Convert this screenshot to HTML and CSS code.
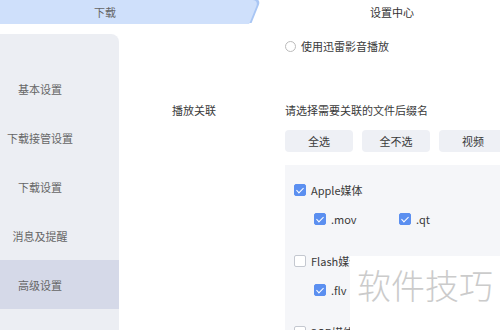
FILE: index.html
```html
<!DOCTYPE html>
<html lang="zh-CN">
<head>
    <meta charset="UTF-8">
    <title>设置中心</title>
    <link rel="stylesheet" href="styles.css">
</head>
<body>
    <div class="tabs">
        <div class="tab tab-off">下载</div>
        <div class="tab tab-on">设置中心</div>
    </div>

    <div class="page">
        <div class="sidebar">
            <div class="nav-item">基本设置</div>
            <div class="nav-item">下载接管设置</div>
            <div class="nav-item">下载设置</div>
            <div class="nav-item">消息及提醒</div>
            <div class="nav-item active">高级设置</div>
        </div>

        <div class="main">
            <div class="row first-row">
                <div class="label"></div>
                <div class="field">
                    <label class="radio"><span class="radio-dot"></span>使用迅雷影音播放</label>
                </div>
            </div>

            <div class="row">
                <div class="label">播放关联</div>
                <div class="field">
                    <div class="hint">请选择需要关联的文件后缀名</div>
                    <div class="btns">
                        <button class="btn">全选</button>
                        <button class="btn">全不选</button>
                        <button class="btn">视频</button>
                    </div>
                    <div class="panel">
                        <div class="group">
                            <label class="check"><span class="box on"></span>Apple媒体</label>
                            <div class="exts">
                                <label class="check ext"><span class="box on"></span>.mov</label>
                                <label class="check ext"><span class="box on"></span>.qt</label>
                            </div>
                        </div>
                        <div class="group">
                            <label class="check"><span class="box"></span>Flash媒体</label>
                            <div class="exts">
                                <label class="check ext"><span class="box on"></span>.flv</label>
                            </div>
                        </div>
                        <div class="group">
                            <label class="check"><span class="box"></span>3GP媒体</label>
                        </div>
                    </div>
                </div>
            </div>
        </div>
    </div>

    <div class="watermark">软件技巧</div>
</body>
</html>
```

FILE: styles.css
```css
* {
    box-sizing: border-box;
}
body {
    margin: 0;
    width: 500px;
    height: 330px;
    overflow: hidden;
    position: relative;
    background-color: #fff;
    font-family: "Noto Sans CJK SC", "Noto Sans", sans-serif;
    font-size: 11px;
    color: #3a3a3a;
}
.tabs {
    display: flex;
    height: 24px;
    position: relative;
}
.tab {
    display: flex;
    align-items: center;
    justify-content: center;
    height: 24px;
}
.tab-off {
    width: 248px;
    color: #666;
    background-color: #cfe0fb;
    position: relative;
    padding-right: 38px;
}
.tab-off::after {
    content: "";
    position: absolute;
    top: 0;
    right: -6px;
    width: 14px;
    height: 24px;
    background-color: #cfe0fb;
    transform: skewX(-22deg);
    border-top-right-radius: 6px;
    box-shadow: 2px -1px 0 #a9c6f4;
}
.tab-on {
    flex: 1;
    color: #333;
    padding-left: 36px;
}
.page {
    display: flex;
    height: 306px;
}
.sidebar {
    width: 119px;
    flex-shrink: 0;
    margin-top: 10px;
    padding-top: 30px;
    background-color: #eceef3;
    border-top-right-radius: 8px;
    display: flex;
    flex-direction: column;
}
.nav-item {
    height: 49px;
    flex-shrink: 0;
    display: flex;
    align-items: center;
    justify-content: center;
    color: #666;
    padding-right: 39px;
}
.nav-item.active {
    background-color: #d5d9e8;
}
.main {
    flex: 1;
    min-width: 0;
    display: flex;
    flex-direction: column;
}
.row {
    display: flex;
}
.first-row {
    margin-top: 14px;
    height: 16px;
}
.row + .row {
    margin-top: 48px;
}
.label {
    width: 166px;
    padding-left: 53px;
    flex-shrink: 0;
    line-height: 16px;
}
.field {
    flex: 1;
    min-width: 0;
}
.radio {
    display: flex;
    align-items: center;
    gap: 5px;
    line-height: 16px;
}
.radio-dot {
    width: 11px;
    height: 11px;
    border: 1px solid #bbb;
    border-radius: 50%;
    background-color: #fff;
}
.hint {
    line-height: 16px;
}
.btns {
    display: flex;
    gap: 9px;
    margin-top: 12px;
}
.btn {
    width: 68px;
    height: 22px;
    flex-shrink: 0;
    border: none;
    border-radius: 4px;
    background-color: #eef0f5;
    font-family: inherit;
    font-size: 11px;
    color: #3a3a3a;
    padding: 0;
}
.panel {
    margin-top: 13px;
    height: 165px;
    background-color: #f5f6f9;
    padding: 18px 9px 0;
    overflow: hidden;
}
.group {
    margin-bottom: 28px;
}
.check {
    display: flex;
    align-items: center;
    gap: 5px;
    height: 14px;
    line-height: 14px;
}
.box {
    width: 12px;
    height: 12px;
    border: 1px solid #c4c8d0;
    border-radius: 2px;
    background-color: #fff;
    flex-shrink: 0;
    position: relative;
}
.box.on {
    border-color: #5b8ff0;
    background-color: #5b8ff0;
}
.box.on::after {
    content: "";
    position: absolute;
    left: 3px;
    top: 1px;
    width: 3px;
    height: 6px;
    border: solid #fff;
    border-width: 0 1.5px 1.5px 0;
    transform: rotate(45deg);
}
.exts {
    display: flex;
    margin-top: 15px;
    padding-left: 20px;
}
.ext {
    width: 85px;
}
.watermark {
    position: absolute;
    left: 350px;
    top: 256px;
    width: 150px;
    height: 74px;
    background-color: #fff;
    color: #cbcbcb;
    font-size: 34px;
    font-weight: 300;
    padding-left: 7px;
    padding-top: 4px;
    line-height: 50px;
}
```
